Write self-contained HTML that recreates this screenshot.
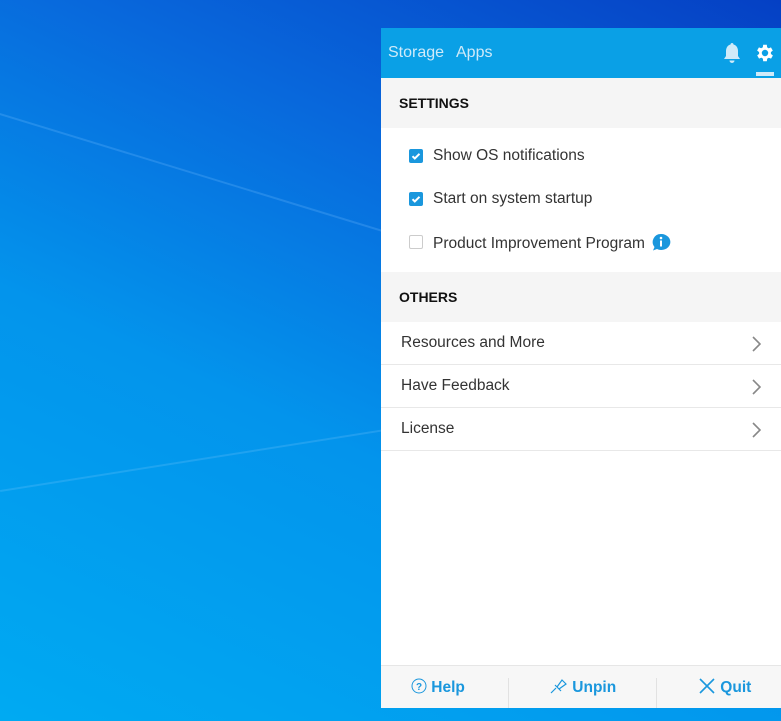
<!DOCTYPE html>
<html><head><meta charset="utf-8"><style>
*{margin:0;padding:0;box-sizing:border-box}
body{width:781px;height:721px;overflow:hidden;font-family:"Liberation Sans",sans-serif;position:relative;
background:linear-gradient(205deg,#0540c4 0%,#0868dc 30%,#0394ec 60%,#00aaf2 100%);}
.beam{position:absolute;left:0;top:113px;width:800px;height:2px;background:rgba(120,190,255,.25);transform:rotate(17deg);transform-origin:0 0}
.beam2{position:absolute;left:0;top:490px;width:800px;height:2px;background:rgba(150,210,255,.2);transform:rotate(-9deg);transform-origin:0 0}
.panel{position:absolute;left:381px;top:28px;width:400px;height:680px;background:#fff}
.hdr{height:50px;background:#0aa0e6;position:relative;color:#cfeaf9;font-size:16px}
.hdr span{position:absolute;top:16px}
.sec{height:50px;background:#f5f5f5;font-size:14px;font-weight:bold;color:#111;padding:17px 0 0 18px}
.cb{height:43px;position:relative;font-size:15.5px;color:#333}
.cb i{position:absolute;left:28px;top:14px;width:14px;height:14px;border-radius:2px;background:#1a97dd}
.cb i.off{background:#fff;border:1px solid #ccc}
.cb span{position:absolute;left:52px;top:12px;white-space:nowrap}
.row{height:43px;border-bottom:1px solid #e8e8e8;position:relative;font-size:15.5px;color:#333}
.row span{position:absolute;left:20px;top:12px}
.row svg{position:absolute;right:20px;top:14px}
.ftr{position:absolute;left:0;top:637px;width:400px;height:43px;background:#f7f7f7;border-top:1px solid #e6e6e6;color:#1a97dd;font-weight:bold;font-size:15.5px}
.ftr div{position:absolute;top:12px}
.sep{position:absolute;top:6px;width:1px;height:30px;background:#e2e2e2}
</style></head><body>
<div class="beam"></div><div class="beam2"></div>
<div class="panel">
<div class="hdr"><span style="left:7px">Storage</span><span style="left:75px">Apps</span>
<svg style="position:absolute;left:341px;top:14px" width="20" height="22" viewBox="0 0 20 22"><path d="M10 1c1 0 1.5.7 1.5 1.5C14.5 3.3 16 6 16 9v5l2 3H2l2-3V9c0-3 1.5-5.7 4.5-6.5C8.5 1.7 9 1 10 1zM7.5 18.5h5a2.5 2.5 0 0 1-5 0z" fill="#cfeaf9"/></svg>
<svg style="position:absolute;left:373px;top:14px" width="22" height="22" viewBox="0 0 24 24"><path fill="#fff" d="M19.4 13a7.5 7.5 0 0 0 0-2l2.1-1.6-2-3.5-2.5 1a7 7 0 0 0-1.7-1L15 3h-4l-.4 2.8a7 7 0 0 0-1.7 1l-2.5-1-2 3.5L6.6 11a7.5 7.5 0 0 0 0 2l-2.1 1.6 2 3.5 2.5-1a7 7 0 0 0 1.7 1L11 21h4l.4-2.8a7 7 0 0 0 1.7-1l2.5 1 2-3.5zM13 15.5a3.5 3.5 0 1 1 0-7 3.5 3.5 0 0 1 0 7z" transform="translate(-1 0)"/></svg>
<div style="position:absolute;left:375px;top:44px;width:18px;height:4px;background:#cfeaf9"></div>
</div>
<div class="sec">SETTINGS</div>
<div style="height:7px"></div>
<div class="cb"><i><svg width="14" height="14" viewBox="0 0 14 14"><path d="M3.5 7.2l2.3 2.3 4.7-4.7" stroke="#fff" stroke-width="2" fill="none"/></svg></i><span>Show OS notifications</span></div>
<div class="cb"><i><svg width="14" height="14" viewBox="0 0 14 14"><path d="M3.5 7.2l2.3 2.3 4.7-4.7" stroke="#fff" stroke-width="2" fill="none"/></svg></i><span>Start on system startup</span></div>
<div class="cb"><i class="off"></i><span>Product Improvement Program <svg style="vertical-align:-3px;margin-left:2px" width="20" height="18" viewBox="0 0 20 18"><path d="M10 1a9 8 0 1 1-4 15l-4 1.5 1.5-3.5A8 8 0 0 1 10 1z" fill="#1a97dd"/><circle cx="10" cy="5" r="1.3" fill="#fff"/><rect x="9" y="7.5" width="2" height="6" fill="#fff"/></svg></span></div>
<div style="height:8px"></div>
<div class="sec">OTHERS</div>
<div class="row"><span>Resources and More</span><svg width="10" height="16"><path d="M2 1l7 7-7 7" stroke="#888" stroke-width="1.6" fill="none"/></svg></div>
<div class="row"><span>Have Feedback</span><svg width="10" height="16"><path d="M2 1l7 7-7 7" stroke="#888" stroke-width="1.6" fill="none"/></svg></div>
<div class="row"><span>License</span><svg width="10" height="16"><path d="M2 1l7 7-7 7" stroke="#888" stroke-width="1.6" fill="none"/></svg></div>
<div class="ftr">
<div style="left:30px"><svg width="16" height="16" style="vertical-align:-2px"><circle cx="8" cy="8" r="7" stroke="#1a97dd" fill="none"/><text x="8" y="12" font-size="10" text-anchor="middle" fill="#1a97dd" font-family="Liberation Sans">?</text></svg> Help</div>
<div class="sep" style="left:127px"></div>
<div style="left:169px"><svg width="18" height="16" style="vertical-align:-2px"><path d="M1 15l5-5M5 7l6 6M7 9l5-7 4 4-7 5" stroke="#1a97dd" fill="none" stroke-width="1.2"/></svg> Unpin</div>
<div class="sep" style="left:275px"></div>
<div style="left:317px"><svg width="18" height="16" style="vertical-align:-2px"><path d="M2 1l14 14M16 1L2 15" stroke="#1a97dd" stroke-width="1.6"/></svg> Quit</div>
</div>
</div>
</body></html>
